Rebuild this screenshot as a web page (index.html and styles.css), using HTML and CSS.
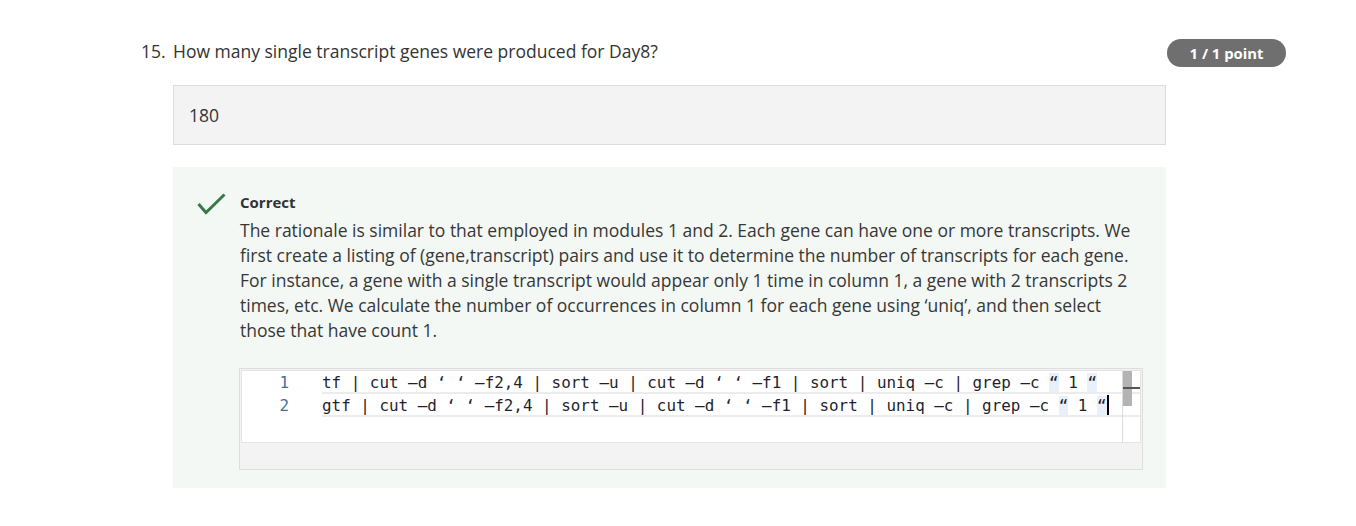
FILE: index.html
```html
<!DOCTYPE html>
<html>
<head>
<meta charset="utf-8">
<link rel="stylesheet" href="styles.css">
</head>
<body>
<div class="quiz">
  <div class="q-row">
    <div class="q-num">15.</div>
    <div class="q-text">How many single transcript genes were produced for Day8?</div>
    <div class="badge">1 / 1 point</div>
  </div>
  <div class="q-body">
    <div class="answer">180</div>
    <div class="feedback">
      <div class="fb-icon">
        <svg width="29" height="22" viewBox="0 0 29 22"><polyline points="1.5,11 9,19.5 27.5,1.5" fill="none" stroke="#3b7a48" stroke-width="3"/></svg>
      </div>
      <div class="fb-content">
        <div class="fb-title">Correct</div>
        <p class="fb-text">The rationale is similar to that employed in modules 1 and 2. Each gene can have one or more transcripts. We first create a listing of (gene,transcript) pairs and use it to determine the number of transcripts for each gene. For instance, a gene with a single transcript would appear only 1 time in column 1, a gene with 2 transcripts 2 times, etc. We calculate the number of occurrences in column 1 for each gene using ‘uniq’, and then select those that have count 1.</p>
        <div class="editor">
          <div class="editor-inner">
            <div class="line"><span class="ln">1</span><span class="code">tf | cut –d ‘ ‘ –f2,4 | sort –u | cut –d ‘ ‘ –f1 | sort | uniq –c | grep –c <span class="hl">“</span> 1 <span class="hl">“</span></span></div>
            <div class="line"><span class="ln">2</span><span class="code">gtf | cut –d ‘ ‘ –f2,4 | sort –u | cut –d ‘ ‘ –f1 | sort | uniq –c | grep –c <span class="hl">“</span> 1 <span class="hl">“</span><span class="cursor"></span></span></div>
            <div class="scroll"><div class="thumb"></div><div class="mark"></div></div>
          </div>
          <div class="editor-foot"></div>
        </div>
      </div>
    </div>
  </div>
</div>
</body>
</html>
```
FILE: styles.css
```css
* { box-sizing: border-box; }
body {
  margin: 0;
  background: #fff;
  font-family: "Open Sans", "Noto Sans", sans-serif;
  color: #333;
}
.quiz {
  margin-left: 141px;
  width: 1145px;
  padding-top: 39px;
}
.q-row {
  display: flex;
  align-items: flex-start;
}
.q-num {
  width: 32px;
  font-size: 17.5px;
  line-height: 24px;
  color: #333;
}
.q-text {
  flex: 1;
  font-size: 17.5px;
  line-height: 24px;
  color: #333;
}
.badge {
  width: 119px;
  height: 28px;
  border-radius: 14px;
  background: #6f6f6f;
  color: #fff;
  font-weight: 700;
  font-size: 14.8px;
  line-height: 28px;
  text-align: center;
}
.q-body {
  margin-left: 32px;
  width: 993px;
}
.answer {
  margin-top: 18px;
  height: 60px;
  background: #f3f3f3;
  border: 1px solid #dcdcdc;
  padding-left: 15px;
  font-size: 17.5px;
  line-height: 58px;
  color: #333;
}
.feedback {
  margin-top: 22px;
  background: #f3f8f4;
  display: flex;
  padding: 25px 23px 18px 24px;
}
.fb-icon {
  width: 43px;
  padding-top: 1px;
}
.fb-icon svg { display: block; }
.fb-content {
  width: 903px;
}
.fb-title {
  font-size: 15px;
  font-weight: 700;
  line-height: 20px;
  color: #333;
}
.fb-text {
  margin: 6px 0 0 0;
  width: 900px;
  font-size: 17.5px;
  line-height: 25px;
  color: #373737;
}
.editor {
  margin-top: 25px;
  margin-left: -1px;
  width: 904px;
  border: 1px solid #dedede;
  background: #f3f3f3;
  padding: 1px 1px 0 1px;
}
.editor-inner {
  position: relative;
  height: 73px;
  background: #fff;
  border: 1px solid #e4e4e4;
}
.line {
  display: flex;
  height: 23px;
}
.ln {
  width: 80px;
  padding-right: 33px;
  padding-top: 3px;
  text-align: right;
  font-family: "DejaVu Sans Mono", "Liberation Mono", monospace;
  font-size: 15.9px;
  line-height: 18px;
  color: #41709f;
}
.code {
  flex: 1;
  height: 23px;
  padding-top: 3px;
  border-bottom: 2px solid #ececec;
  font-family: "DejaVu Sans Mono", "Liberation Mono", monospace;
  font-size: 15.9px;
  line-height: 18px;
  color: #1f1f2e;
  white-space: pre;
  overflow: hidden;
}
.hl { background: #e8f0fc; }
.cursor {
  display: inline-block;
  width: 2px;
  height: 21px;
  margin-top: -2px;
  background: #000;
  vertical-align: top;
}
.scroll {
  position: absolute;
  top: 0;
  right: 0;
  bottom: 0;
  width: 18px;
  border-left: 1px solid #dcdcdc;
}
.thumb {
  position: absolute;
  left: 0;
  top: 0;
  width: 9px;
  height: 35px;
  background: #b3b3b3;
}
.mark {
  position: absolute;
  left: 0;
  top: 16px;
  width: 17px;
  height: 2px;
  background: #555;
}
.editor-foot {
  height: 26px;
}
```
